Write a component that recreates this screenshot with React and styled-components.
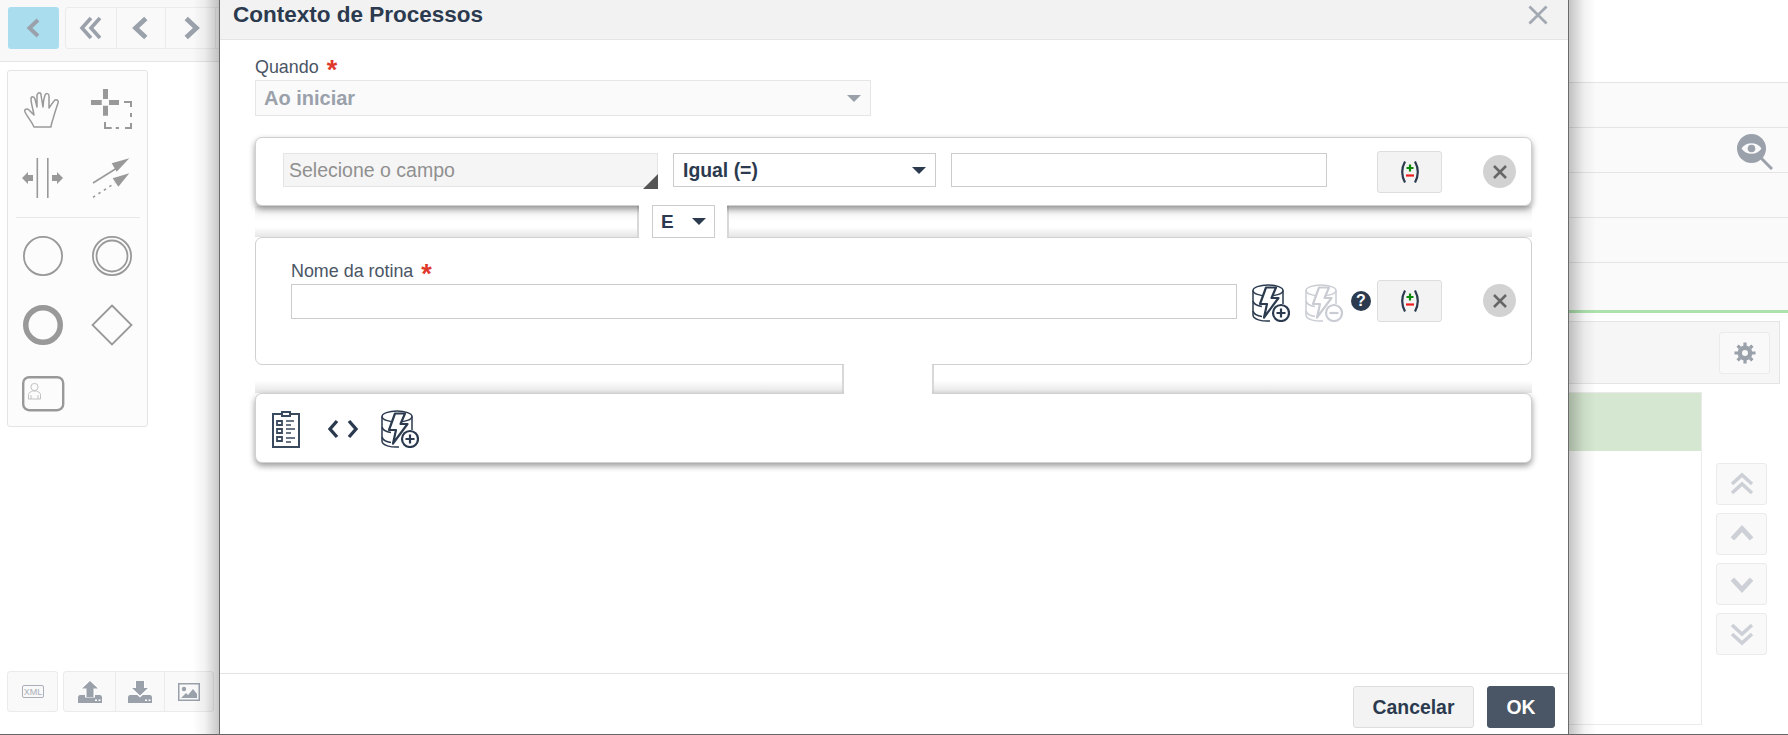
import React from "react";
import styled, { createGlobalStyle } from "styled-components";

const Global = createGlobalStyle`
  html, body { margin: 0; padding: 0; background: #fff; }
  body { font-family: "Liberation Sans", Arial, sans-serif; overflow: hidden; }
  * { box-sizing: border-box; }
`;

const Page = styled.div`
  position: relative;
  width: 1788px;
  height: 735px;
  overflow: hidden;
  display: flex;
  background: #fff;
  border-bottom: 1px solid #666;
`;

/* background screen, mostly hidden behind the dialog */
const LeftPane = styled.div`
  width: 240px;
  height: 734px;
  display: flex;
  flex-direction: column;
`;
const TopBar = styled.div`
  height: 62px;
  background: #f8f8f8;
  border-bottom: 1px solid #e4e4e4;
  padding: 7px 8px;
  display: flex;
  gap: 6px;
`;
const BackButton = styled.div`
  width: 51px;
  height: 42px;
  flex: none;
  background: #aadeee;
  border-radius: 3px;
  display: flex;
  align-items: center;
  justify-content: center;
`;
const BtnGroup = styled.div`
  display: flex;
  height: ${(p) => p.$h || 42}px;
  border: 1px solid #ebebeb;
  border-radius: 3px;
  background: #f9f9f9;
`;
const GroupBtn = styled.div`
  width: ${(p) => p.$w || 49}px;
  display: flex;
  align-items: center;
  justify-content: center;
  & + & { border-left: 1px solid #ebebeb; }
`;
const Palette = styled.div`
  width: 141px;
  height: 357px;
  margin: 8px 0 0 7px;
  border: 1px solid #e4e4e4;
  border-radius: 3px;
  background: #fcfcfc;
  padding: 18px 7px 0 14px;
`;
const PaletteGrid = styled.div`
  display: grid;
  grid-template-columns: 42px 42px;
  column-gap: 27px;
  row-gap: 27px;
  justify-content: start;
`;
const PaletteDivider = styled.div`
  height: 1px;
  background: #e8e8e8;
  margin: 17px 0 17px -6px;
`;
const BottomBar = styled.div`
  margin: auto 0 22px 7px;
  display: flex;
  gap: 5px;
`;

const RightPane = styled.div`
  flex: 1;
  display: flex;
  padding-left: 1300px;
  flex-direction: column;
`;
const Rows = styled.div`
  margin-top: 82px;
  height: 231px;
  background: #fafafa;
  border-top: 1px solid #e4e4e4;
  border-bottom: 3px solid #ade2ad;
`;
const Row = styled.div`
  height: 45px;
  border-bottom: 1px solid #e4e4e4;
  display: flex;
  align-items: center;
  justify-content: flex-end;
  padding: 3px 15px 0 0;
  &:last-child { border-bottom: 0; }
`;
const ToolBox = styled.div`
  height: 63px;
  width: 240px;
  margin-top: 8px;
  background: #f6f6f6;
  border: 1px solid #e4e4e4;
  border-left: 0;
  display: flex;
  align-items: center;
  justify-content: flex-end;
  padding-right: 9px;
`;
const SquareBtn = styled.div`
  width: 51px;
  height: 42px;
  background: #f9f9f9;
  border: 1px solid #ebebeb;
  border-radius: 3px;
  display: flex;
  align-items: center;
  justify-content: center;
`;
const TableArea = styled.div`
  display: flex;
  margin-top: 8px;
  gap: 14px;
`;
const TableBox = styled.div`
  width: 162px;
  height: 333px;
  border: 1px solid #eaeaea;
  background: #fff;
`;
const GreenRow = styled.div`
  height: 58px;
  background: #d5e7d0;
`;
const OrderBtns = styled.div`
  margin-top: 71px;
  display: flex;
  flex-direction: column;
  gap: 8px;
`;

/* dialog */
const Shade = styled.div`
  position: absolute;
  left: 193px;
  top: 0;
  width: 1403px;
  height: 735px;
  background: linear-gradient(90deg, rgba(0,0,0,0) 0, rgba(0,0,0,.05) 12px, rgba(0,0,0,.22) 26px, rgba(0,0,0,.22) 1377px, rgba(0,0,0,.05) 1391px, rgba(0,0,0,0) 100%);
`;
const Dialog = styled.div`
  position: absolute;
  left: 219px;
  top: -1px;
  width: 1350px;
  height: 736px;
  background: #fff;
  border: 1px solid #6b6b6b;
  border-top: 0;
  display: flex;
  flex-direction: column;
`;
const DialogHead = styled.div`
  height: 41px;
  flex: none;
  background: #f2f2f2;
  border-bottom: 1px solid #e4e4e4;
  display: flex;
  align-items: center;
  justify-content: space-between;
  padding: 0 20px 8px 13px;
`;
const Title = styled.div`
  font-size: 22.5px;
  font-weight: 700;
  color: #2b3a4e;
`;
const DialogBody = styled.div`
  flex: 1;
  padding: 15px 35px 0;
`;
const Label = styled.label`
  display: block;
  height: 25px;
  line-height: 24px;
  font-size: 17.9px;
  color: #4a5565;
`;
const Star = styled.span`
  color: #e0392b;
  font-weight: 700;
  font-size: 27px;
  line-height: 20px;
  margin-left: 8px;
  vertical-align: -6px;
`;
const WhenSelect = styled.div`
  width: 616px;
  height: 36px;
  margin-bottom: 21px;
  background: #fafafa;
  border: 1px solid #e6e6e6;
  display: flex;
  align-items: center;
  justify-content: space-between;
  padding: 0 9px 0 8px;
  font-size: 20px;
  font-weight: 700;
  color: #9aa1ab;
`;
const Caret = styled.span`
  width: 0;
  height: 0;
  border-left: 7px solid transparent;
  border-right: 7px solid transparent;
  border-top: 7px solid ${(p) => p.$color || "#2b3a4e"};
`;
const Card = styled.div`
  position: relative;
  width: 1277px;
  height: ${(p) => p.$h}px;
  background: #fff;
  border: 1px solid #d0d0d0;
  border-radius: 7px;
  box-shadow: ${(p) => (p.$flat ? "none" : "0 3px 6px rgba(0,0,0,.4)")};
  display: flex;
  align-items: flex-start;
`;
const FieldPicker = styled.div`
  position: relative;
  width: 375px;
  height: 34px;
  margin: 15px 0 0 27px;
  background: #f5f5f5;
  border: 1px solid #e4e4e4;
  display: flex;
  align-items: center;
  padding-left: 5px;
  font-size: 19.5px;
  color: #909090;
  &::after {
    content: "";
    position: absolute;
    right: -1px;
    bottom: -3px;
    border-left: 15px solid transparent;
    border-bottom: 15px solid #555;
  }
`;
const OperatorSelect = styled.div`
  width: 263px;
  height: 34px;
  margin: 15px 0 0 15px;
  background: #fff;
  border: 1px solid #ccc;
  display: flex;
  align-items: center;
  justify-content: space-between;
  padding: 0 9px;
  font-size: 19.4px;
  font-weight: 700;
  color: #2b3a4e;
`;
const TextInput = styled.div`
  width: ${(p) => p.$w}px;
  height: ${(p) => p.$h || 34}px;
  margin: ${(p) => p.$m || "15px 0 0 15px"};
  background: #fff;
  border: 1px solid #ccc;
`;
const FormulaBtn = styled.div`
  position: absolute;
  left: 1121px;
  top: ${(p) => p.$top}px;
  width: 65px;
  height: 42px;
  background: #f3f3f3;
  border: 1px solid #ddd;
  border-radius: 3px;
  display: flex;
  align-items: center;
  justify-content: center;
`;
const RemoveBtn = styled.div`
  position: absolute;
  left: 1227px;
  top: ${(p) => p.$top}px;
  width: 33px;
  height: 33px;
  border-radius: 50%;
  background: #d2d2d2;
  display: flex;
  align-items: center;
  justify-content: center;
`;
const Connector = styled.div`
  width: 1277px;
  height: ${(p) => p.$h}px;
  display: flex;
`;
const SidePanel = styled.div`
  flex: ${(p) => (p.$w ? `0 0 ${p.$w}px` : "1")};
  background: ${(p) =>
    p.$both
      ? "linear-gradient(180deg, rgba(0,0,0,.07) 0, rgba(0,0,0,0) 15px, rgba(0,0,0,0) 21px, rgba(0,0,0,.1) 100%)"
      : "linear-gradient(180deg, rgba(0,0,0,0) 55%, rgba(0,0,0,.1) 100%)"};
  border-left: ${(p) => (p.$w ? "0" : "2px solid #d8d8d8")};
  border-right: ${(p) => (p.$w ? "2px solid #d8d8d8" : "0")};
`;
const ConnectorTab = styled.div`
  position: relative;
  z-index: 1;
  flex: 0 0 ${(p) => p.$w}px;
  height: calc(100% + 2px);
  margin-top: -1px;
  background: #fff;
  padding-left: 13px;
`;
const AndSelect = styled.div`
  width: 63px;
  height: 33px;
  background: #fff;
  border: 1px solid #ccc;
  display: flex;
  align-items: center;
  justify-content: space-between;
  padding: 0 8px;
  font-size: 19px;
  font-weight: 700;
  color: #2b3a4e;
`;
const RoutineField = styled.div`
  margin: 21px 0 0 35px;
`;
const IconRow = styled.div`
  display: flex;
  align-items: center;
  gap: ${(p) => p.$gap}px;
  margin: ${(p) => p.$m};
`;
const Help = styled.div`
  width: 20px;
  height: 20px;
  margin: -4px 0 0 -7px;
  border-radius: 50%;
  background: #2b3a4e;
  color: #fff;
  font-size: 16px;
  font-weight: 700;
  line-height: 20px;
  text-align: center;
`;
const DialogFoot = styled.div`
  height: 61px;
  flex: none;
  border-top: 1px solid #e4e4e4;
  display: flex;
  justify-content: flex-end;
  align-items: flex-start;
  gap: 13px;
  padding: 12px 13px 0 0;
`;
const FootBtn = styled.button`
  height: 42px;
  width: ${(p) => p.$w}px;
  border-radius: 3px;
  font-family: inherit;
  font-size: 19.4px;
  font-weight: 700;
  padding: 0;
  color: ${(p) => (p.$primary ? "#fff" : "#2b3a4e")};
  background: ${(p) => (p.$primary ? "#4a5565" : "#f3f3f3")};
  border: 1px solid ${(p) => (p.$primary ? "#4a5565" : "#ddd")};
`;

const Chevron = ({ dir = "left", color = "#9aa1ab", size = 24 }) => {
  const rot = { left: 0, right: 180, up: 90, down: 270 }[dir];
  return (
    <svg width={size} height={size} viewBox="0 0 20 20" style={{ transform: `rotate(${rot}deg)` }}>
      <path d="M14 2 L5.5 10 L14 18" fill="none" stroke={color} strokeWidth="4" />
    </svg>
  );
};

const DoubleChevron = ({ dir = "left", color = "#9aa1ab", size = 24 }) => {
  const rot = { left: 0, right: 180, up: 90, down: 270 }[dir];
  return (
    <svg width={size} height={size} viewBox="0 0 24 24" style={{ transform: `rotate(${rot}deg)` }}>
      <path d="M12 2 L3 12 L12 22 M21 2 L12 12 L21 22" fill="none" stroke={color} strokeWidth="3.6" />
    </svg>
  );
};

const Hand = () => (
  <svg width="42" height="42" viewBox="-2 -3 42 42" fill="none" stroke="#999" strokeWidth="1.5" strokeLinejoin="round" strokeLinecap="round">
    <path d="M10 35 C8 30 4 26 1 20 C0 17 3 16 5 18 L10 23 C9 17 7 11 7 7 C7 4 10 4 11 7 L13 15 C13 10 13 6 13 3 C14 0 17 0 17 3 L19 15 C19 10 20 6 21 3 C22 1 25 1 25 4 L25 16 C27 13 29 10 31 8 C33 7 35 9 34 11 C32 17 30 23 29 27 C28 30 27 33 27 35 Z" />
  </svg>
);
const LassoIcon = () => (
  <svg width="42" height="42" viewBox="0 0 42 42" fill="none" stroke="#999">
    <path d="M14.5 0V10M14.5 16.7V26.7M0 13.5H10.7M18 13.5H28" strokeWidth="5" />
    <path d="M33 13H40V18M40 24V28M40 34V39H34M24.7 39H28M20.7 39H14V33" strokeWidth="2" />
  </svg>
);
const SplitIcon = () => (
  <svg width="42" height="42" viewBox="0 0 42 42" fill="#999">
    <rect x="14.5" y="0" width="1.6" height="40" />
    <rect x="25" y="0" width="1.6" height="40" />
    <path d="M0 20 L6 14 V17 H11 V23 H6 V26 Z" />
    <path d="M41 20 L35 14 V17 H30 V23 H35 V26 Z" />
  </svg>
);
const ArrowsIcon = () => (
  <svg width="42" height="42" viewBox="0 0 42 42" fill="#999">
    <path d="M2 25 L26 10" stroke="#999" strokeWidth="1.6" />
    <path d="M38.3 .3 L20.7 5.3 L25.7 13.7 Z" />
    <path d="M2 39.3 L24 25" stroke="#999" strokeWidth="1.6" strokeDasharray="2.5 4" />
    <path d="M38.3 15.3 L21.7 20.3 L27.3 28.7 Z" />
  </svg>
);
const Circle = ({ w = 1.8, double }) => (
  <svg width="42" height="42" viewBox="0 0 42 42" fill="none" stroke="#999" strokeWidth={w}>
    <circle cx="21" cy="21" r={20 - w / 2} />
    {double && <circle cx="21" cy="21" r="15.5" />}
  </svg>
);
const Diamond = () => (
  <svg width="42" height="42" viewBox="0 0 42 42" fill="none" stroke="#999" strokeWidth="1.8">
    <path d="M21 1.5 L40.5 21 L21 40.5 L1.5 21 Z" />
  </svg>
);
const TaskIcon = () => (
  <svg width="43" height="42" viewBox="0 -3 43 42" fill="none">
    <rect x="1.2" y="1.2" width="40" height="33" rx="6" stroke="#999" strokeWidth="2.4" />
    <circle cx="12.5" cy="11" r="3.6" stroke="#bbb" strokeWidth=".9" />
    <path d="M6.5 23V18.5C6.5 16.5 9 16 10.5 15H14.5C16 16 18.5 16.5 18.5 18.5V23ZM9 19V23M16 19V23" stroke="#bbb" strokeWidth=".9" />
  </svg>
);
const XmlIcon = () => (
  <svg width="22" height="13" viewBox="0 0 22 13">
    <rect x=".5" y=".5" width="21" height="12" rx="1.5" fill="none" stroke="#a9aeb8" />
    <text x="11" y="10" fontSize="9" textAnchor="middle" fill="#a9aeb8" fontFamily="Liberation Sans">XML</text>
  </svg>
);
const TransferIcon = ({ down }) => (
  <svg width="24" height="22" viewBox="0 0 24 22">
    <path d="M0 16.5C0 15 1 14 2 14H22C23 14 24 15 24 16.5V22H0Z" fill="#9aa1ab" />
    <path d={down ? "M7 -1H17V7H22.5L12 16.5L1.5 7H7Z" : "M12 -1.5L22.5 8H17V16.5H7V8H1.5Z"} fill="#fff" />
    <path d={down ? "M8 0H16V7H20L12 14.5L4 7H8Z" : "M12 0L20 7.5H15.5V16H8.5V7.5H4Z"} fill="#9aa1ab" />
    <path d="M17 18.5H19V20H17ZM20.5 18.5H22.5V20H20.5Z" fill="#fff" />
  </svg>
);
const ImageIcon = () => (
  <svg width="22" height="18" viewBox="0 0 22 18" fill="#9aa1ab">
    <path fillRule="evenodd" d="M0 0H22V18H0ZM1.5 1.5V16.5H20.5V1.5Z" />
    <circle cx="6" cy="6" r="2.2" />
    <path d="M3 15 L8 10 L10 12 L15 6 L19 11 V15Z" />
  </svg>
);
const EyeSearch = () => (
  <svg width="36" height="36" viewBox="0 0 36 36">
    <circle cx="14.5" cy="14.5" r="14.5" fill="#9aa1ab" />
    <path d="M4.5 14.5C9 7.5 20 7.5 24.5 14.5C20 21.5 9 21.5 4.5 14.5Z" fill="#fafafa" />
    <circle cx="14.5" cy="14.5" r="3.8" fill="#9aa1ab" />
    <path d="M24 24L35 35" stroke="#9aa1ab" strokeWidth="3" />
  </svg>
);
const Gear = () => (
  <svg width="22" height="22" viewBox="0 0 22 22">
    <path d="M11 5.8A5.2 5.2 0 1 0 11 16.2A5.2 5.2 0 1 0 11 5.8Z" fill="none" stroke="#9aa1ab" strokeWidth="4.4" />
    <path d="M11 .5V4M11 18V21.5M.5 11H4M18 11H21.5M3.6 3.6L6 6M16 16L18.4 18.4M18.4 3.6L16 6M6 16L3.6 18.4" stroke="#9aa1ab" strokeWidth="3.2" />
  </svg>
);
const Formula = () => (
  <svg width="20" height="24" viewBox="0 0 20 24" fill="none">
    <path d="M5 1.5C1 9 1 15 5 22.5M15 1.5C19 9 19 15 15 22.5" stroke="#2b3a4e" strokeWidth="2.2" />
    <path d="M10 4.5V11.5M6.5 8H13.5" stroke="#0a8a0a" strokeWidth="2.2" />
    <path d="M6 15.5H14" stroke="#ee1c1c" strokeWidth="2.2" />
  </svg>
);
const CloseX = ({ size = 14, color = "#666", w = 2.5 }) => (
  <svg width={size} height={size} viewBox="0 0 14 14">
    <path d="M1 1L13 13M13 1L1 13" stroke={color} strokeWidth={w} />
  </svg>
);
const DbBolt = ({ color = "#2b3a4e", minus }) => (
  <svg width="38" height="38" viewBox="0 0 38 38" fill="none" stroke={color} strokeWidth="1.5" strokeLinejoin="round">
    <ellipse cx="16" cy="6.5" rx="15" ry="5.5" />
    <path d="M1 6.5V31C1 35.5 10 37.5 18 37M31 6.5V20" />
    <path d="M1 17C2 20.5 6 22 10 22.5M1 27C2 30.5 6 32 10 32.5" />
    <path d="M14 3.5H24L19.5 14H26.5L12 33.5L15 20H8Z" fill="#fff" strokeWidth="2.2" />
    <circle cx="29" cy="29" r="8" fill="#fff" strokeWidth="2.2" />
    <path d={minus ? "M24.5 29H33.5" : "M24.5 29H33.5M29 24.5V33.5"} strokeWidth="2.2" />
  </svg>
);
const Clipboard = () => (
  <svg width="33" height="37" viewBox="0 0 33 37" fill="none" stroke="#3a4a5e" strokeWidth="2">
    <path d="M9 3H1V36H27V3H19" />
    <rect x="10" y="1" width="8" height="4" />
    <path d="M5 10H10V14H5ZM5 18H10V22H5ZM5 26H10V30H5Z" strokeWidth="1.8" />
    <path d="M14 10H22M14 14H19M14 18H23M14 22H19M14 27H23M14 31H19" strokeWidth="1.6" />
  </svg>
);
const CodeIcon = () => (
  <svg width="30" height="20" viewBox="0 0 30 20" fill="none" stroke="#2b3a4e" strokeWidth="3.4">
    <path d="M9 2L2 10L9 18M21 2L28 10L21 18" />
  </svg>
);

const App = () => (
  <Page>
    <Global />
    <LeftPane>
      <TopBar>
        <BackButton><Chevron size={20} /></BackButton>
        <BtnGroup>
          <GroupBtn $w={50}><DoubleChevron /></GroupBtn>
          <GroupBtn><Chevron /></GroupBtn>
          <GroupBtn $w={50}><Chevron dir="right" /></GroupBtn>
          <GroupBtn $w={30} />
        </BtnGroup>
      </TopBar>
      <Palette>
        <PaletteGrid>
          <Hand />
          <LassoIcon />
          <SplitIcon />
          <ArrowsIcon />
        </PaletteGrid>
        <PaletteDivider />
        <PaletteGrid>
          <Circle />
          <Circle double />
          <Circle w={5.5} />
          <Diamond />
          <TaskIcon />
        </PaletteGrid>
      </Palette>
      <BottomBar>
        <BtnGroup $h={41}><GroupBtn $w={49}><XmlIcon /></GroupBtn></BtnGroup>
        <BtnGroup $h={41}>
          <GroupBtn $w={51}><TransferIcon /></GroupBtn>
          <GroupBtn $w={49}><TransferIcon down /></GroupBtn>
          <GroupBtn $w={49}><ImageIcon /></GroupBtn>
        </BtnGroup>
      </BottomBar>
    </LeftPane>
    <RightPane>
      <Rows>
        <Row />
        <Row><EyeSearch /></Row>
        <Row />
        <Row />
        <Row />
      </Rows>
      <ToolBox><SquareBtn><Gear /></SquareBtn></ToolBox>
      <TableArea>
        <TableBox><GreenRow /></TableBox>
        <OrderBtns>
          <SquareBtn><DoubleChevron dir="up" color="#cdd0d6" /></SquareBtn>
          <SquareBtn><Chevron dir="up" color="#cdd0d6" /></SquareBtn>
          <SquareBtn><Chevron dir="down" color="#cdd0d6" /></SquareBtn>
          <SquareBtn><DoubleChevron dir="down" color="#cdd0d6" /></SquareBtn>
        </OrderBtns>
      </TableArea>
    </RightPane>

    <Shade />
    <Dialog>
      <DialogHead>
        <Title>Contexto de Processos</Title>
        <CloseX size={20} color="#a3a9b2" w={1.9} />
      </DialogHead>
      <DialogBody>
        <Label>Quando<Star>*</Star></Label>
        <WhenSelect>Ao iniciar<Caret $color="#9aa1ab" /></WhenSelect>
        <Card $h={69}>
          <FieldPicker>Selecione o campo</FieldPicker>
          <OperatorSelect>Igual (=)<Caret /></OperatorSelect>
          <TextInput $w={376} />
          <FormulaBtn $top={13}><Formula /></FormulaBtn>
          <RemoveBtn $top={17}><CloseX /></RemoveBtn>
        </Card>
        <Connector $h={31}>
          <SidePanel $w={384} $both />
          <ConnectorTab $w={88}>
            <AndSelect>E<Caret /></AndSelect>
          </ConnectorTab>
          <SidePanel $both />
        </Connector>
        <Card $h={128} $flat>
          <RoutineField>
            <Label>Nome da rotina<Star>*</Star></Label>
            <TextInput $w={946} $h={35} $m="0" />
          </RoutineField>
          <IconRow $gap={15} $m="46px 0 0 15px">
            <DbBolt />
            <DbBolt color="#c9cdd3" minus />
            <Help>?</Help>
          </IconRow>
          <FormulaBtn $top={42}><Formula /></FormulaBtn>
          <RemoveBtn $top={46}><CloseX /></RemoveBtn>
        </Card>
        <Connector $h={28}>
          <SidePanel $w={589} />
          <ConnectorTab $w={88} />
          <SidePanel />
        </Connector>
        <Card $h={70}>
          <IconRow $gap={23} $m="16px 0 0 16px">
            <Clipboard />
            <CodeIcon />
            <DbBolt />
          </IconRow>
        </Card>
      </DialogBody>
      <DialogFoot>
        <FootBtn $w={121}>Cancelar</FootBtn>
        <FootBtn $w={68} $primary>OK</FootBtn>
      </DialogFoot>
    </Dialog>
  </Page>
);

export default App;
